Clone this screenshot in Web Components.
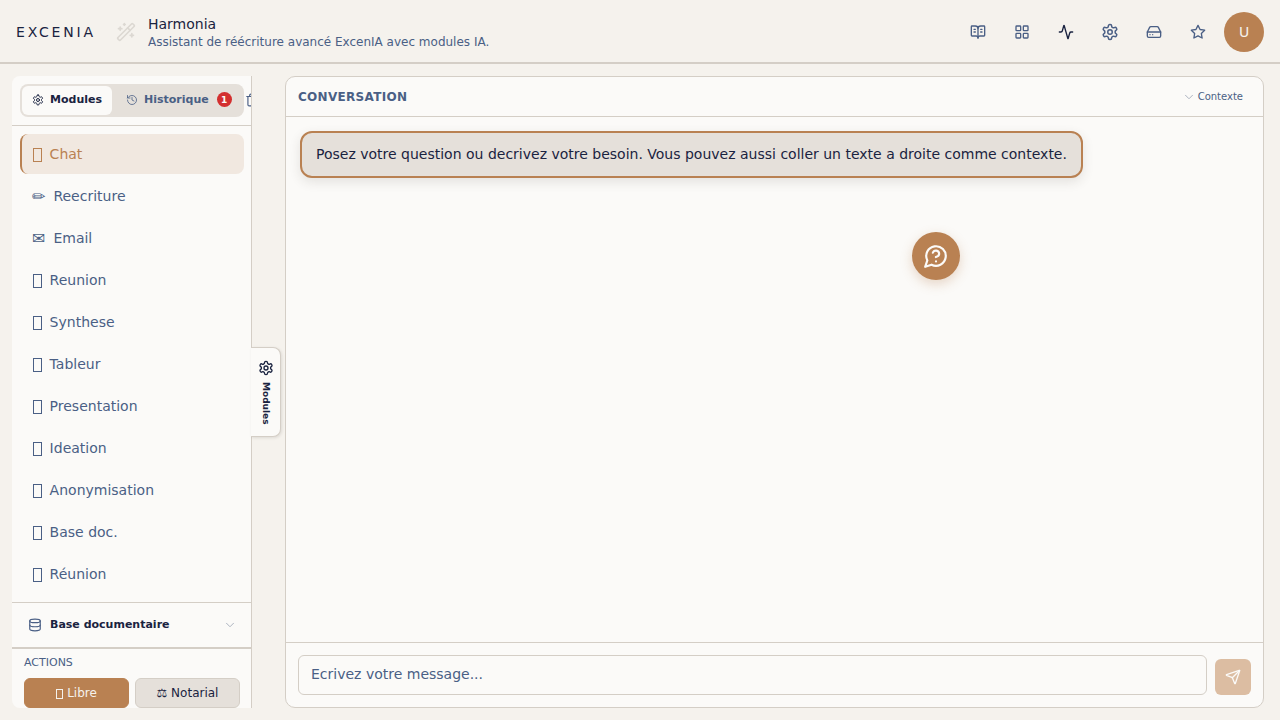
<!DOCTYPE html>
<html lang="fr">
<head>
<meta charset="utf-8">
<title>Harmonia</title>
<style>
  html, body { margin: 0; height: 100%; }
  body {
    background: #f5f2ed;
    color: #1a2340;
    font-family: "DejaVu Sans", sans-serif;
    overflow: hidden;
  }
</style>
</head>
<body>
<app-shell>
  <app-header slot="header" title-text="Harmonia" subtitle="Assistant de réécriture avancé ExcenIA avec modules IA."></app-header>
  <side-bar slot="side">
    <nav-item active label="Chat"></nav-item>
    <nav-item glyph="✏" label="Reecriture"></nav-item>
    <nav-item glyph="✉" label="Email"></nav-item>
    <nav-item label="Reunion"></nav-item>
    <nav-item label="Synthese"></nav-item>
    <nav-item label="Tableur"></nav-item>
    <nav-item label="Presentation"></nav-item>
    <nav-item label="Ideation"></nav-item>
    <nav-item label="Anonymisation"></nav-item>
    <nav-item label="Base doc."></nav-item>
    <nav-item label="Réunion"></nav-item>
  </side-bar>
  <chat-panel slot="main"></chat-panel>
</app-shell>

<script>
(function() {
  const ICONS = {
    book: '<path d="M12 7v14"/><path d="M16 12h2"/><path d="M16 8h2"/><path d="M3 18a1 1 0 0 1-1-1V4a1 1 0 0 1 1-1h5a4 4 0 0 1 4 4 4 4 0 0 1 4-4h5a1 1 0 0 1 1 1v13a1 1 0 0 1-1 1h-6a3 3 0 0 0-3 3 3 3 0 0 0-3-3z"/><path d="M6 12h2"/><path d="M6 8h2"/>',
    grid: '<rect width="7" height="7" x="3" y="3" rx="1"/><rect width="7" height="7" x="14" y="3" rx="1"/><rect width="7" height="7" x="14" y="14" rx="1"/><rect width="7" height="7" x="3" y="14" rx="1"/>',
    activity: '<path d="M22 12h-2.48a2 2 0 0 0-1.93 1.46l-2.35 8.36a.25.25 0 0 1-.48 0L9.24 2.18a.25.25 0 0 0-.48 0l-2.35 8.36A2 2 0 0 1 4.49 12H2"/>',
    settings: '<path d="M12.22 2h-.44a2 2 0 0 0-2 2v.18a2 2 0 0 1-1 1.73l-.43.25a2 2 0 0 1-2 0l-.15-.08a2 2 0 0 0-2.73.73l-.22.38a2 2 0 0 0 .73 2.73l.15.1a2 2 0 0 1 1 1.72v.51a2 2 0 0 1-1 1.74l-.15.09a2 2 0 0 0-.73 2.73l.22.38a2 2 0 0 0 2.73.73l.15-.08a2 2 0 0 1 2 0l.43.25a2 2 0 0 1 1 1.73V20a2 2 0 0 0 2 2h.44a2 2 0 0 0 2-2v-.18a2 2 0 0 1 1-1.73l.43-.25a2 2 0 0 1 2 0l.15.08a2 2 0 0 0 2.73-.73l.22-.39a2 2 0 0 0-.73-2.73l-.15-.08a2 2 0 0 1-1-1.74v-.5a2 2 0 0 1 1-1.74l.15-.09a2 2 0 0 0 .73-2.73l-.22-.38a2 2 0 0 0-2.73-.73l-.15.08a2 2 0 0 1-2 0l-.43-.25a2 2 0 0 1-1-1.73V4a2 2 0 0 0-2-2z"/><circle cx="12" cy="12" r="3"/>',
    drive: '<line x1="22" x2="2" y1="12" y2="12"/><path d="M5.45 5.11 2 12v6a2 2 0 0 0 2 2h16a2 2 0 0 0 2-2v-6l-3.45-6.89A2 2 0 0 0 16.76 4H7.24a2 2 0 0 0-1.79 1.11z"/><line x1="6" x2="6.01" y1="16" y2="16"/><line x1="10" x2="10.01" y1="16" y2="16"/>',
    star: '<polygon points="12 2 15.09 8.26 22 9.27 17 14.14 18.18 21.02 12 17.77 5.82 21.02 7 14.14 2 9.27 8.91 8.26 12 2"/>',
    wand: '<path d="m21.64 3.64-1.28-1.28a1.21 1.21 0 0 0-1.72 0L2.36 18.64a1.21 1.21 0 0 0 0 1.72l1.28 1.28a1.2 1.2 0 0 0 1.72 0L21.64 5.36a1.2 1.2 0 0 0 0-1.72"/><path d="m14 7 3 3"/><path d="M5 6v4"/><path d="M19 14v4"/><path d="M10 2v2"/><path d="M7 8H3"/><path d="M21 16h-4"/><path d="M11 3H9"/>',
    history: '<path d="M3 12a9 9 0 1 0 9-9 9.75 9.75 0 0 0-6.74 2.74L3 8"/><path d="M3 3v5h5"/><path d="M12 7v5l4 2"/>',
    database: '<ellipse cx="12" cy="5" rx="9" ry="3"/><path d="M3 5V19A9 3 0 0 0 21 19V5"/><path d="M3 12A9 3 0 0 0 21 12"/>',
    help: '<path d="M7.9 20A9 9 0 1 0 4 16.1L2 22Z"/><path d="M9.09 9a3 3 0 0 1 5.83 1c0 2-3 3-3 3"/><path d="M12 17h.01"/>',
    send: '<path d="M14.536 21.686a.5.5 0 0 0 .937-.024l6.5-19a.496.496 0 0 0-.635-.635l-19 6.5a.5.5 0 0 0-.024.937l7.93 3.18a2 2 0 0 1 1.112 1.11z"/><path d="m21.854 2.147-10.94 10.939"/>',
    trash: '<path d="M3 6h18"/><path d="M19 6v14c0 1-1 2-2 2H7c-1 0-2-1-2-2V6"/><path d="M8 6V4c0-1 1-2 2-2h4c1 0 2 1 2 2v2"/>',
    chevron: '<path d="m6 9 6 6 6-6"/>'
  };

  class UiIcon extends HTMLElement {
    connectedCallback() {
      if (this.shadowRoot) return;
      const root = this.attachShadow({ mode: "open" });
      const size = this.getAttribute("size") || 16;
      const weight = this.getAttribute("weight") || 2;
      root.innerHTML = `
        <style>
          :host { display: inline-flex; flex: none; }
          svg { display: block; }
        </style>
        <svg xmlns="http://www.w3.org/2000/svg" width="${size}" height="${size}" viewBox="0 0 24 24" fill="none" stroke="currentColor" stroke-width="${weight}" stroke-linecap="round" stroke-linejoin="round">${ICONS[this.getAttribute("name")]}</svg>`;
    }
  }
  customElements.define("ui-icon", UiIcon);

  const shellTemplate = document.createElement("template");
  shellTemplate.innerHTML = `
    <style>
      :host { display: flex; flex-direction: column; height: 720px; }
      .body { flex: 1; min-height: 0; display: flex; padding: 12px 16px 12px 12px; }
    </style>
    <slot name="header"></slot>
    <div class="body">
      <slot name="side"></slot>
      <slot name="main"></slot>
    </div>`;
  class AppShell extends HTMLElement {
    constructor() {
      super();
      this.attachShadow({ mode: "open" }).appendChild(shellTemplate.content.cloneNode(true));
    }
  }
  customElements.define("app-shell", AppShell);

  const headerTemplate = document.createElement("template");
  headerTemplate.innerHTML = `
    <style>
      :host {
        display: flex; align-items: center; box-sizing: border-box;
        height: 64px; padding: 2px 16px 0; flex: none;
        background: #f5f2ed; border-bottom: 2px solid #d4cec6;
      }
      .brand { font-size: 14px; letter-spacing: 2.8px; color: #1a2340; width: 100px; }
      .wand { color: #dcd8d2; margin-right: 12px; display: flex; }
      h1 { margin: 0; font-size: 14px; font-weight: 400; line-height: 20px; color: #1a2340; }
      p { margin: 0; font-size: 12px; line-height: 16px; color: #4a5f85; }
      .titles { flex: 1; margin-top: -1px; }
      .tools { display: flex; align-items: center; gap: 4px; }
      button {
        width: 40px; height: 40px; padding: 0; border: 0; background: none;
        display: flex; align-items: center; justify-content: center; color: #4a5f85;
      }
      button.on { color: #1a2340; }
      .avatar {
        margin-left: 2px; width: 40px; height: 40px; border-radius: 50%;
        background: #b98152; color: #f5f2ed; font-size: 14px;
        display: flex; align-items: center; justify-content: center;
      }
    </style>
    <div class="brand">EXCENIA</div>
    <div class="wand"><ui-icon name="wand" size="20" weight="2"></ui-icon></div>
    <div class="titles"><h1></h1><p></p></div>
    <div class="tools">
      <button><ui-icon name="book" size="16"></ui-icon></button>
      <button><ui-icon name="grid" size="16"></ui-icon></button>
      <button class="on"><ui-icon name="activity" size="16"></ui-icon></button>
      <button><ui-icon name="settings" size="18"></ui-icon></button>
      <button><ui-icon name="drive" size="16"></ui-icon></button>
      <button><ui-icon name="star" size="16"></ui-icon></button>
      <div class="avatar">U</div>
    </div>`;
  class AppHeader extends HTMLElement {
    constructor() {
      super();
      this._shadowRoot = this.attachShadow({ mode: "open" });
      this._shadowRoot.appendChild(headerTemplate.content.cloneNode(true));
    }
    connectedCallback() {
      this._shadowRoot.querySelector("h1").textContent = this.getAttribute("title-text");
      this._shadowRoot.querySelector("p").textContent = this.getAttribute("subtitle");
    }
  }
  customElements.define("app-header", AppHeader);

  const navTemplate = document.createElement("template");
  navTemplate.innerHTML = `
    <style>
      :host {
        display: flex; align-items: center; box-sizing: border-box;
        height: 40px; padding: 0 10px; border-radius: 8px; gap: 8px;
        font-size: 14px; color: #4a5f85; border-left: 2px solid transparent;
      }
      :host([active]) { background: #f1e8e0; color: #b98152; border-left-color: #b98152; }
      .glyph { font-size: 16px; }
      .tofu {
        box-sizing: border-box; width: 9px; height: 14px; margin: 2px -.4px 0 1px;
        border: 1px solid currentColor; flex: none;
      }
    </style>
    <span class="mark"></span><span class="label"></span>`;
  class NavItem extends HTMLElement {
    constructor() {
      super();
      this._shadowRoot = this.attachShadow({ mode: "open" });
      this._shadowRoot.appendChild(navTemplate.content.cloneNode(true));
    }
    connectedCallback() {
      // emoji have no glyph in the reference font, they show as an empty box
      const mark = this._shadowRoot.querySelector(".mark");
      const glyph = this.getAttribute("glyph");
      mark.className = glyph ? "glyph" : "tofu";
      if (glyph) mark.textContent = glyph;
      this._shadowRoot.querySelector(".label").textContent = this.getAttribute("label");
    }
  }
  customElements.define("nav-item", NavItem);

  const sideTemplate = document.createElement("template");
  sideTemplate.innerHTML = `
    <style>
      :host {
        display: flex; flex-direction: column; flex: none; position: relative;
        width: 240px; margin-right: 33px; box-sizing: border-box;
        background: #fbfaf8; border-right: 1px solid #d4cec6;
        border-radius: 8px 0 0 8px;
      }
      .clip { display: flex; flex-direction: column; height: 100%; overflow: hidden; border-radius: 8px 0 0 8px; }
      .tabs-row { flex: none; height: 50px; border-bottom: 1px solid #d4cec6; padding: 8px 0 0 8px; box-sizing: border-box; display: flex; gap: 1px; }
      .tabs {
        display: flex; width: 224px; height: 33px; box-sizing: border-box; padding: 2px;
        background: #e5e0da; border-radius: 8px; font-size: 11px; font-weight: 700; flex: none;
      }
      .tab { display: flex; align-items: center; gap: 6px; border-radius: 6px; color: #4a5f85; padding-bottom: 2px; box-sizing: border-box; }
      .tab.on { width: 90px; background: #fbfaf8; color: #1a2340; justify-content: center; }
      .tab.off { padding-left: 14px; flex: 1; }
      .badge {
        width: 15px; height: 15px; border-radius: 50%; background: #d32f2f; color: #fbfaf8;
        font-size: 9px; display: flex; align-items: center; justify-content: center; margin-left: 2px;
      }
      .trash { color: #4a5f85; padding-top: 8px; flex: none; }
      nav { flex: 1; min-height: 0; padding: 8px 7px 0 8px; display: flex; flex-direction: column; gap: 2px; }
      .base {
        flex: none; height: 47px; box-sizing: border-box; display: flex; align-items: center;
        padding: 0 14px 1px 16px; gap: 8px; border-top: 1px solid #d4cec6; border-bottom: 2px solid #d4cec6;
        font-size: 11px; font-weight: 700; color: #1a2340;
      }
      .base span { flex: 1; }
      .base .db { color: #4a5f85; }
      .base .chev { color: #a7aebb; }
      .actions { flex: none; height: 59px; box-sizing: border-box; padding: 7px 11px 0 12px; }
      .actions h2 { margin: 0 0 8px; font-size: 11px; line-height: 14px; font-weight: 400; color: #4a5f85; }
      .btns { display: flex; gap: 6px; }
      .btn {
        flex: 1; height: 30px; box-sizing: border-box; border-radius: 6px; font-size: 12px;
        display: flex; align-items: center; justify-content: center; gap: 4px;
        border: 1px solid #d4cec6; background: #e5e0da; color: #1a2340;
      }
      .btn.on { background: #b98152; border-color: #b98152; color: #f5f2ed; }
      .tofu { box-sizing: border-box; width: 7px; height: 10px; margin-top: 2px; border: 1px solid currentColor; }
      .toggle {
        position: absolute; left: 239px; top: 271px; width: 30px; height: 90px; box-sizing: border-box;
        background: #fbfaf8; border: 1px solid #d4cec6; border-left: 0; border-radius: 0 8px 8px 0;
        box-shadow: 1px 1px 3px rgba(60, 50, 40, .12);
        display: flex; flex-direction: column; align-items: center; padding-top: 12px; gap: 6px;
        color: #1a2340; font-size: 9px; font-weight: 700;
      }
      .toggle span { writing-mode: vertical-rl; line-height: 11px; }
    </style>
    <div class="clip">
      <div class="tabs-row">
        <div class="tabs">
          <div class="tab on"><ui-icon name="settings" size="12"></ui-icon>Modules</div>
          <div class="tab off"><ui-icon name="history" size="12" weight="1.6"></ui-icon>Historique<div class="badge">1</div></div>
        </div>
        <div class="trash"><ui-icon name="trash" size="14"></ui-icon></div>
      </div>
      <nav><slot></slot></nav>
      <div class="base"><ui-icon class="db" name="database" size="14"></ui-icon><span>Base documentaire</span><ui-icon class="chev" name="chevron" size="14" weight="1.6"></ui-icon></div>
      <div class="actions">
        <h2>ACTIONS</h2>
        <div class="btns">
          <div class="btn on"><i class="tofu"></i>Libre</div>
          <div class="btn">⚖ Notarial</div>
        </div>
      </div>
    </div>
    <div class="toggle"><ui-icon name="settings" size="16"></ui-icon><span>Modules</span></div>`;
  class SideBar extends HTMLElement {
    constructor() {
      super();
      this.attachShadow({ mode: "open" }).appendChild(sideTemplate.content.cloneNode(true));
    }
  }
  customElements.define("side-bar", SideBar);

  const chatTemplate = document.createElement("template");
  chatTemplate.innerHTML = `
    <style>
      :host {
        display: flex; flex-direction: column; flex: 1; min-width: 0; position: relative;
        box-sizing: border-box; background: #fbfaf8;
        border: 1px solid #d4cec6; border-radius: 10px;
      }
      .top {
        flex: none; height: 40px; box-sizing: border-box; display: flex; align-items: center;
        padding: 0 20px 0 12px; border-bottom: 1px solid #d4cec6;
      }
      .top h2 { flex: 1; margin: 0; font-size: 12px; font-weight: 700; letter-spacing: .3px; color: #4a5f85; }
      .ctx { display: flex; align-items: center; gap: 2px; font-size: 10px; color: #4a5f85; }
      .ctx ui-icon { color: #a7aebb; }
      .msgs { flex: 1; min-height: 0; padding: 14px 14px; }
      .bubble {
        display: inline-block; box-sizing: border-box; padding: 12px 14px; border: 2px solid #b98152;
        border-radius: 12px; background: #e5e0da; font-size: 14px; line-height: 19px; color: #1a2340;
        box-shadow: 0 4px 12px rgba(60, 50, 40, .12);
      }
      .fab {
        position: absolute; left: 626px; top: 155px; width: 48px; height: 48px; border-radius: 50%;
        background: #b98152; color: #fbfaf8; display: flex; align-items: center; justify-content: center;
        box-shadow: 0 4px 12px rgba(185, 129, 82, .3);
      }
      .bottom {
        flex: none; height: 65px; box-sizing: border-box; display: flex; align-items: flex-start; gap: 8px;
        padding: 12px 12px 0; border-top: 1px solid #d4cec6;
      }
      .field {
        flex: 1; height: 40px; box-sizing: border-box; display: flex; align-items: center; padding: 0 12px 2px;
        border: 1px solid #d4cec6; border-radius: 6px; font-size: 14px; color: #4a5f85; background: #fbfaf8;
      }
      .send {
        width: 36px; height: 36px; margin-top: 4px; border-radius: 6px; background: #dcbda2; color: #fbfaf8;
        display: flex; align-items: center; justify-content: center;
      }
    </style>
    <div class="top">
      <h2>CONVERSATION</h2>
      <div class="ctx"><ui-icon name="chevron" size="14" weight="1.6"></ui-icon>Contexte</div>
    </div>
    <div class="msgs"><div class="bubble">Posez votre question ou decrivez votre besoin. Vous pouvez aussi coller un texte a droite comme contexte.</div></div>
    <div class="fab"><ui-icon name="help" size="26" weight="2"></ui-icon></div>
    <div class="bottom">
      <div class="field">Ecrivez votre message...</div>
      <div class="send"><ui-icon name="send" size="16"></ui-icon></div>
    </div>`;
  class ChatPanel extends HTMLElement {
    constructor() {
      super();
      this.attachShadow({ mode: "open" }).appendChild(chatTemplate.content.cloneNode(true));
    }
  }
  customElements.define("chat-panel", ChatPanel);
})();
</script>
</body>
</html>
